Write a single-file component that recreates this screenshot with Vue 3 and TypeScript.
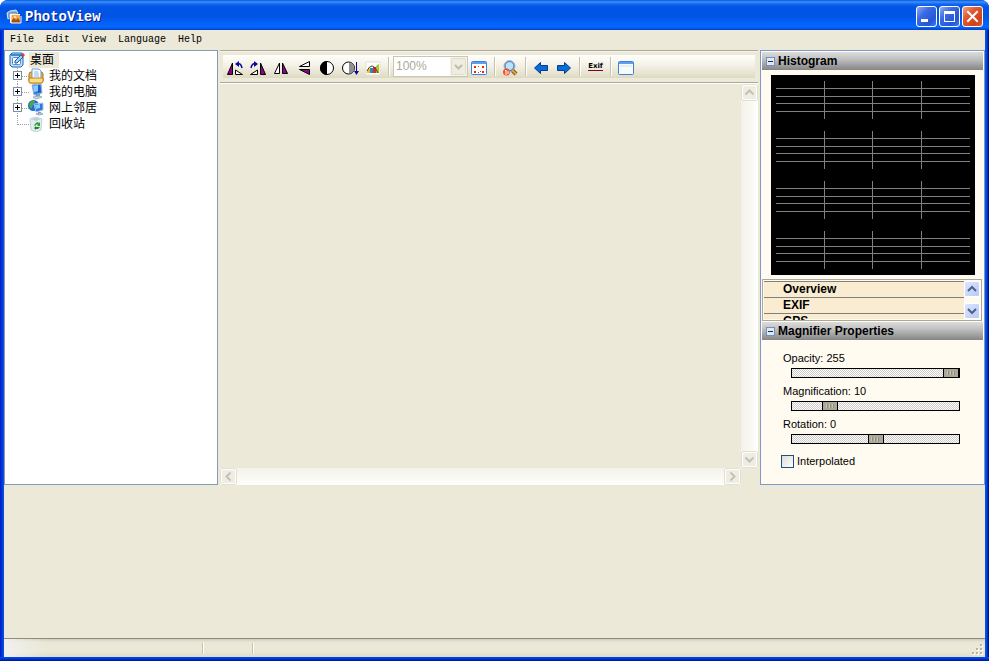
<script setup lang="ts">
import { reactive, ref } from 'vue'

interface Slider {
  id: string
  label: string
  min: number
  max: number
  value: number
}

const menus: string[] = ['File', 'Edit', 'View', 'Language', 'Help']
const places = [
  { name: '我的文档', icon: 'documents', expandable: true },
  { name: '我的电脑', icon: 'computer', expandable: true },
  { name: '网上邻居', icon: 'network', expandable: true },
  { name: '回收站', icon: 'recycle', expandable: false },
]
const sections: string[] = ['Overview', 'EXIF', 'GPS']
const sliders = reactive<Slider[]>([
  { id: 'opacity', label: 'Opacity', min: 0, max: 255, value: 255 },
  { id: 'magnification', label: 'Magnification', min: 0, max: 50, value: 10 },
  { id: 'rotation', label: 'Rotation', min: -180, max: 180, value: 0 },
])
const interpolated = ref(false)
const showHistogram = ref(true)
const showMagnifier = ref(true)

const bands = [0, 50, 100, 150]
const levels = [13, 21, 28, 36]
const columns = [53, 101, 150]
</script>

<template>
  <div class="window">
    <header class="titlebar">
      <svg class="app-icon" viewBox="0 0 16 16" width="16" height="16" aria-hidden="true">
        <path d="M1 4l3-2 6-1 2 3-8 5-2 1z" fill="#7db4e6" stroke="#d5e9fa" />
        <path d="M3 4h8v5H3z" fill="#c9e0f4" stroke="#5d86b8" />
        <path d="M4 5h10v9H4z" fill="#fff4df" />
        <path d="M5 6h9v8H5z" fill="#f5a94a" />
        <path d="M5 12l3-3 2 2 2-2 2 3v2H5z" fill="#a5501c" />
        <circle cx="9" cy="8" r="1" fill="#fff0a0" />
        <path d="M5 5v9h10V7" fill="none" stroke="#fffaf0" />
      </svg>
      <h1>PhotoView</h1>
      <div class="caption-buttons">
        <button type="button" class="caption" aria-label="Minimize">
          <svg viewBox="0 0 19 19" width="19" height="19"><path d="M4 12h7v3H4z" fill="#fff" /></svg>
        </button>
        <button type="button" class="caption" aria-label="Maximize">
          <svg viewBox="0 0 19 19" width="19" height="19"><path d="M4 4h11v11H4zM5 7v7h9V7z" fill="#fff" fill-rule="evenodd" /></svg>
        </button>
        <button type="button" class="caption close" aria-label="Close">
          <svg viewBox="0 0 19 19" width="19" height="19"><path d="M5 5l9 9M14 5l-9 9" stroke="#fff" stroke-width="2" stroke-linecap="square" /></svg>
        </button>
      </div>
    </header>

    <div class="client">
      <nav class="menubar">
        <button v-for="menu in menus" :key="menu" type="button">{{ menu }}</button>
      </nav>

      <main class="workspace">
        <aside class="tree">
          <div class="root">
            <svg viewBox="0 0 16 16" width="16" height="16" aria-hidden="true">
              <path d="M1 3l2-2h10l1 2v10l-2 2H3l-2-2z" fill="#c6e0f7" stroke="#1c67b4" />
              <path d="M2 2h11v2H2z" fill="#3c8bd4" />
              <rect x="3.500" y="5.500" width="8" height="7" rx="1" fill="#fff" stroke="#4a93d8" />
              <path d="M6 11V9l6-6 2 2-6 6z" fill="#a9d2f3" stroke="#165ba6" />
              <path d="M12 3l2-2 2 2-2 2z" fill="#d6432c" />
            </svg>
            <span class="selected">桌面</span>
          </div>
          <ul>
            <li v-for="place in places" :key="place.name">
              <button v-if="place.expandable" type="button" class="expander" :aria-label="place.name">
                <svg viewBox="0 0 9 9" width="9" height="9">
                  <rect x=".5" y=".5" width="8" height="8" fill="#fff" stroke="#7b8fa8" />
                  <path d="M2 4h5v1H2zM4 2h1v5H4z" fill="#000" />
                </svg>
              </button>
              <svg class="place-icon" viewBox="0 0 16 16" width="16" height="16" aria-hidden="true">
                <g v-if="place.icon === 'documents'">
                  <path d="M1 6q0-2 2-2h10q2 0 2 2v7q0 2-2 2H2q-1 0-1-2z" fill="#e9b23e" stroke="#b47a12" />
                  <path d="M4 1h7l2 2v8H4z" fill="#f8fcff" stroke="#6c9fd5" />
                  <path d="M6 4h4M6 6h5M6 8h5" stroke="#8db9e5" />
                  <path d="M1 10h14v3q0 2-2 2H2q-1 0-1-2z" fill="#fbdc83" stroke="#bc8420" />
                </g>
                <g v-else-if="place.icon === 'computer'">
                  <path d="M4 1l9-1 1 9-8 2z" fill="#2f7fe4" stroke="#8fb2dc" />
                  <path d="M5 2l5-1v6l-4 1z" fill="#8ccbff" />
                  <path d="M10 1h2l1 7-3 1z" fill="#1a5ccc" />
                  <path d="M8 10h4v3H7z" fill="#7f9abb" />
                  <path d="M5 13l7-1 2 1-6 2z" fill="#cfdcea" stroke="#9dafc5" />
                </g>
                <g v-else-if="place.icon === 'network'">
                  <circle cx="5.500" cy="5.500" r="5.500" fill="#1f6ccd" />
                  <path d="M2 2q4-3 5 0L5 5 3 9Q0 6 2 2z" fill="#4aa846" />
                  <path d="M6 4l9-1v7l-7 2z" fill="#2c78e0" stroke="#a8c6e8" />
                  <path d="M7 5l5-1v4L8 9z" fill="#8ccbff" />
                  <path d="M10 12h3v1h-3z" fill="#7d97b7" />
                  <path d="M8 14l5-1 2 1-4 1z" fill="#dce8f4" stroke="#91a8c4" />
                </g>
                <g v-else>
                  <path d="M2 3l6-2 6 2-1 11-5 2-5-2z" fill="#e2edf3" stroke="#c3d2da" />
                  <path d="M3 3l5-1 5 1-5 2z" fill="#b8ccd8" />
                  <path d="M6 9l3-3 2 1 1-1v4H9l1-1-1-1-2 2z" fill="#28a22b" />
                  <path d="M12 11l-2 2H8v1l-2-2 2-2v1h2z" fill="#168c1c" />
                </g>
              </svg>
              <span>{{ place.name }}</span>
            </li>
          </ul>
        </aside>

        <section class="center">
          <div class="toolbar-frame">
            <div class="toolbar" role="toolbar">
              <button type="button" aria-label="Rotate left">
                <svg viewBox="0 0 18 18" width="18" height="18">
                  <path d="M6.500 4v11.500h-5z" fill="#900090" stroke="#000" />
                  <path d="M9.500 11v4.500h7z" fill="#fff" stroke="#000" />
                  <path d="M12 5q3-1 4 4" fill="none" stroke="#0808a0" stroke-width="1.500" />
                  <path d="M9 5l4-3v6z" fill="#0808a0" />
                </svg>
              </button>
              <button type="button" aria-label="Rotate right">
                <svg viewBox="0 0 18 18" width="18" height="18">
                  <path d="M11.500 4v11.500h5z" fill="#900090" stroke="#000" />
                  <path d="M8.500 11v4.500h-7z" fill="#fff" stroke="#000" />
                  <path d="M6 5Q3 4 2 9" fill="none" stroke="#0808a0" stroke-width="1.500" />
                  <path d="M9 5L5 2v6z" fill="#0808a0" />
                </svg>
              </button>
              <button type="button" aria-label="Flip horizontal">
                <svg viewBox="0 0 18 18" width="18" height="18">
                  <path d="M7.500 4v10.500h-5z" fill="#fff" stroke="#000" />
                  <path d="M10.500 4v10.500h5z" fill="#900090" stroke="#000" />
                </svg>
              </button>
              <button type="button" aria-label="Flip vertical">
                <svg viewBox="0 0 18 18" width="18" height="18">
                  <path d="M14.500 2.500v5h-10z" fill="#fff" stroke="#000" />
                  <path d="M14.500 15.500v-5h-10z" fill="#900090" stroke="#000" />
                </svg>
              </button>
              <button type="button" aria-label="Contrast">
                <svg viewBox="0 0 18 18" width="18" height="18">
                  <circle cx="9" cy="9" r="6.500" fill="#fff" stroke="#000" />
                  <path d="M9 2a7 7 0 0 0 0 14z" fill="#000" />
                </svg>
              </button>
              <button type="button" aria-label="Brightness">
                <svg viewBox="0 0 18 18" width="18" height="18">
                  <circle cx="7.500" cy="9" r="6" fill="#fff" stroke="#000" />
                  <path d="M8 3.500a5.500 5.500 0 0 1 0 11z" fill="#909090" />
                  <path d="M15 3h1v9h2l-2.500 4-2.500-4h2z" fill="#0808a0" />
                </svg>
              </button>
              <button type="button" aria-label="Levels">
                <svg viewBox="0 0 18 18" width="18" height="18">
                  <path d="M2 3h14v13H2z" fill="#fff" stroke="#e2e0d8" />
                  <path d="M12 7l3-2v9h-3z" fill="#a8c81c" />
                  <path d="M3 11l3-2v5H3z" fill="#f0c020" />
                  <path d="M6 9h3v5H6z" fill="#1c8ec4" />
                  <path d="M9 8h3v6H9z" fill="#e8242c" />
                  <path d="M3 12q2-5 5-5t6 7" fill="none" stroke="#404040" />
                </svg>
              </button>
              <i class="separator"></i>
              <label class="zoom">
                <select disabled aria-label="Zoom"><option>100%</option></select>
                <svg viewBox="0 0 17 19" width="17" height="19" aria-hidden="true">
                  <path d="M0 0h17v19H0z" fill="#f5f4ea" />
                  <rect x="1.500" y="1.500" width="14" height="16" rx="1" fill="#efede0" stroke="#e0ddcb" />
                  <path d="M5 8l3.500 3.500L12 8" fill="none" stroke="#bfbcae" stroke-width="2" />
                </svg>
              </label>
              <button type="button" aria-label="Fit to window">
                <svg viewBox="0 0 18 18" width="18" height="18">
                  <rect x="1.500" y="2.500" width="15" height="13" rx="1" fill="#fff" stroke="#3c82dc" />
                  <path d="M2 3h14v2H2z" fill="#5ea0ee" />
                  <path d="M4 7h2v2H4zM12 7h2v2h-2zM4 12h2v2H4zM12 12h2v2h-2zM8 7h1v1H8zM10 12h1v1h-1zM8 13h1v1H8z" fill="#e02818" />
                </svg>
              </button>
              <i class="separator"></i>
              <button type="button" aria-label="Magnifier">
                <svg viewBox="0 0 18 18" width="18" height="18">
                  <path d="M11 11l4 4" stroke="#8a5216" stroke-width="4" />
                  <path d="M11 11l4 4" stroke="#eda23e" stroke-width="2" />
                  <circle cx="8.500" cy="7" r="5.500" fill="none" stroke="#a8b4bc" />
                  <circle cx="8.500" cy="7" r="4.500" fill="#b8e4fb" stroke="#2e6db4" />
                  <circle cx="5.500" cy="13" r="3.500" fill="#ee5236" />
                  <path d="M4 12l1-1v5M7 12v3" stroke="#fff" fill="none" />
                </svg>
              </button>
              <i class="separator"></i>
              <button type="button" aria-label="Previous">
                <svg viewBox="0 0 18 18" width="18" height="18"><path d="M2.500 9l6-5.500v3h7v5h-7v3z" fill="#0a6cd8" stroke="#033c94" /></svg>
              </button>
              <button type="button" aria-label="Next">
                <svg viewBox="0 0 18 18" width="18" height="18"><path d="M15.500 9l-6-5.500v3h-7v5h7v3z" fill="#0a6cd8" stroke="#033c94" /></svg>
              </button>
              <i class="separator"></i>
              <button type="button" class="exif"><span>Exif</span></button>
              <i class="separator"></i>
              <button type="button" aria-label="Full screen">
                <svg viewBox="0 0 18 18" width="18" height="18">
                  <rect x="1.500" y="2.500" width="15" height="13" rx="1" fill="#f7fafc" stroke="#3c82dc" />
                  <path d="M2 3h14v2H2z" fill="#5ea0ee" />
                  <path d="M3 7h12" stroke="#d6e2ee" />
                </svg>
              </button>
            </div>
          </div>
          <div class="viewer">
            <div class="canvas"></div>
            <div class="scrollbar vertical">
              <button type="button" disabled aria-label="Scroll up"><svg viewBox="0 0 15 15" width="15" height="15"><path d="M3.500 9.500l4-4 4 4" /></svg></button>
              <button type="button" disabled aria-label="Scroll down"><svg viewBox="0 0 15 15" width="15" height="15"><path d="M3.500 5.500l4 4 4-4" /></svg></button>
            </div>
            <div class="scrollbar horizontal">
              <button type="button" disabled aria-label="Scroll left"><svg viewBox="0 0 15 15" width="15" height="15"><path d="M9.500 3.500l-4 4 4 4" /></svg></button>
              <button type="button" disabled aria-label="Scroll right"><svg viewBox="0 0 15 15" width="15" height="15"><path d="M5.500 3.500l4 4-4 4" /></svg></button>
            </div>
          </div>
        </section>

        <aside class="side">
          <h2>
            <button type="button" @click="showHistogram = !showHistogram">
              <svg viewBox="0 0 9 9" width="9" height="9"><rect x=".5" y=".5" width="8" height="8" fill="#dfe8f6" stroke="#7391b8" /><path d="M2 4h5v1H2z" fill="#1c2c54" /></svg>
              Histogram
            </button>
          </h2>
          <div v-if="showHistogram" class="histogram">
            <svg viewBox="0 0 204 200" aria-hidden="true">
              <path d="M0 0h204v200H0z" fill="#000" />
              <g v-for="band in bands" :key="band" fill="#808080">
                <rect v-for="level in levels" :key="level" x="5" :y="band + level" width="194" height="1" />
                <rect v-for="column in columns" :key="column" :x="column" :y="band + 6" width="1" height="38" />
              </g>
            </svg>
          </div>
          <div class="sections">
            <ul>
              <li v-for="section in sections" :key="section">{{ section }}</li>
            </ul>
            <div class="section-scroll">
              <button type="button" aria-label="Previous section"><svg viewBox="0 0 14 14" width="14" height="14"><path d="M3 9l4-4 4 4" /></svg></button>
              <button type="button" aria-label="Next section"><svg viewBox="0 0 14 14" width="14" height="14"><path d="M3 5l4 4 4-4" /></svg></button>
            </div>
          </div>
          <h2>
            <button type="button" @click="showMagnifier = !showMagnifier">
              <svg viewBox="0 0 9 9" width="9" height="9"><rect x=".5" y=".5" width="8" height="8" fill="#dfe8f6" stroke="#7391b8" /><path d="M2 4h5v1H2z" fill="#1c2c54" /></svg>
              Magnifier Properties
            </button>
          </h2>
          <div v-if="showMagnifier" class="magnifier">
            <div v-for="slider in sliders" :key="slider.id" class="slider">
              <label :for="slider.id">{{ slider.label }}: {{ slider.value }}</label>
              <input :id="slider.id" v-model.number="slider.value" type="range" :min="slider.min" :max="slider.max" />
            </div>
            <label class="check">
              <input v-model="interpolated" type="checkbox" />
              Interpolated
            </label>
          </div>
        </aside>
      </main>

      <footer class="statusbar">
        <span class="cell wide"></span>
        <span class="cell"></span>
        <svg class="grip" viewBox="0 0 12 12" width="12" height="12" aria-hidden="true">
          <path d="M9 1h2v2H9zM5 5h2v2H5zM9 5h2v2H9zM1 9h2v2H1zM5 9h2v2H5zM9 9h2v2H9z" fill="#fff" />
          <path d="M8 0h2v2H8zM4 4h2v2H4zM8 4h2v2H8zM0 8h2v2H0zM4 8h2v2H4zM8 8h2v2H8z" fill="#b8b4a2" />
        </svg>
      </footer>
    </div>
  </div>
</template>

<style>
body {
  margin: 0;
  background: #fff;
}
</style>

<style scoped>
.window,
.window * {
  box-sizing: border-box;
}

.window {
  display: flex;
  flex-direction: column;
  min-height: 100vh;
  padding: 0 4px 4px;
  border-radius: 8px 8px 0 0;
  background:
    linear-gradient(#0046e6 0 1px, #0030d0 2px, #00138c 4px) 0 100% / 100% 4px no-repeat,
    linear-gradient(90deg, #0019cf, #0855dd 4px) 0 0 / 4px 100% no-repeat,
    linear-gradient(90deg, #0855dd, #0046e6 2px, #00138c 3px) 100% 0 / 4px 100% no-repeat,
    #0855dd;
  font: 11px/16px "Liberation Sans", sans-serif;
  color: #000;
  overflow: hidden;
}

button {
  margin: 0;
  padding: 0;
  border: 0;
  background: none;
  color: inherit;
  font: inherit;
}

svg {
  display: block;
}

ul {
  margin: 0;
  padding: 0;
  list-style: none;
}

.titlebar {
  display: flex;
  align-items: center;
  height: 30px;
  margin: 0 -4px;
  padding: 3px 6px 0;
  background: linear-gradient(#0958d8 0, #3b93ff 2px, #1467ee 4px, #0254e3 7px, #0054e4 16px, #0462fa 24px, #0468ff 27px, #0450d8 29px, #003dd7 30px);
}

.titlebar h1 {
  flex: 1;
  margin: 0 0 0 3px;
  font: bold 14px/20px "Liberation Mono", monospace;
  color: #fff;
  text-shadow: 1px 1px #0a1883;
}

.caption-buttons {
  display: flex;
  gap: 2px;
}

.caption {
  width: 21px;
  height: 21px;
  border: 1px solid #fff;
  border-radius: 3px;
  background: linear-gradient(135deg, #8fabf4, #3b6ae4 35%, #2456d8 75%, #3f79f2);
}

.caption.close {
  background: linear-gradient(135deg, #f0a48c, #e05a32 35%, #d04316 75%, #e05c30);
}

.client {
  display: flex;
  flex: 1;
  flex-direction: column;
  background: #ece9d8;
}

.menubar {
  display: flex;
  gap: 12px;
  height: 20px;
  padding: 0 6px;
  font: 10px/20px "Liberation Mono", monospace;
}

.workspace {
  display: grid;
  grid-template-columns: 214px minmax(0, 1fr) 225px;
  gap: 2px;
}

.tree {
  padding-top: 1px;
  border: 1px solid #7f9db9;
  background: #fff;
  font: 12px/16px "Liberation Sans", "Noto Sans CJK SC", sans-serif;
}

.root {
  display: flex;
  gap: 4px;
  height: 16px;
  padding-left: 4px;
}

.selected {
  padding: 0 5px 0 1px;
  background: #ece9d8;
}

.tree li {
  position: relative;
  display: flex;
  align-items: center;
  gap: 5px;
  height: 16px;
  padding-left: 23px;
}

.tree li::before {
  content: "";
  position: absolute;
  top: 0;
  left: 12px;
  width: 11px;
  height: 8px;
  border-bottom: 1px dotted #a0a0a0;
  border-left: 1px dotted #a0a0a0;
}

.tree li:not(:last-child)::after {
  content: "";
  position: absolute;
  top: 8px;
  left: 12px;
  height: 8px;
  border-left: 1px dotted #a0a0a0;
}

.expander {
  position: absolute;
  z-index: 1;
  top: 3px;
  left: 8px;
}

.center {
  display: flex;
  flex-direction: column;
}

.toolbar-frame {
  padding: 4px 3px;
  border-top: 1px solid #aca899;
  border-bottom: 1px solid #aca899;
  box-shadow: 0 1px #fff, inset 0 1px #f8f6ec;
}

.toolbar {
  display: flex;
  align-items: center;
  height: 23px;
  padding-left: 1px;
  background: linear-gradient(#fffefb, #f4f2e6 45%, #dedac2);
}

.toolbar button {
  display: flex;
  flex: none;
  align-items: center;
  width: 23px;
  height: 23px;
  padding: 2px 2px 0;
}

.separator {
  flex: none;
  width: 8px;
  height: 19px;
  background: linear-gradient(90deg, #c5c2b0 50%, #fff 50%) 3px 0 / 2px 100% no-repeat;
}

.zoom {
  display: flex;
  flex: none;
  width: 75px;
  height: 21px;
  border: 1px solid #c9c7ba;
  background: #fff;
}

.zoom select {
  flex: 1;
  min-width: 0;
  padding: 0 2px;
  border: 0;
  appearance: none;
  background: #fff;
  color: #aca899;
  font: 12px/19px "Liberation Sans", sans-serif;
  opacity: 1;
}

.toolbar .exif {
  justify-content: center;
  padding: 0;
}

.exif span {
  border-bottom: 1px solid #800020;
  font: bold 7px/8px "DejaVu Sans", sans-serif;
}

.viewer {
  display: grid;
  flex: 1;
  grid-template-columns: minmax(0, 1fr) 17px;
  grid-template-rows: minmax(0, 1fr) 17px;
  padding-top: 1px;
}

.scrollbar {
  display: flex;
  justify-content: space-between;
  padding: 1px;
}

.vertical {
  flex-direction: column;
  background: linear-gradient(90deg, #f3f2e9, #fefefc);
}

.horizontal {
  background: linear-gradient(#f3f2e9, #fefefc);
}

.scrollbar button {
  border-radius: 2px;
  background: #efede2;
  box-shadow: inset 0 0 0 1px #fff, 0 0 0 1px #e2dfd0;
}

.scrollbar path {
  fill: none;
  stroke: #c3c1b5;
  stroke-width: 2;
}

.side {
  padding: 1px 1px 15px;
  border: 1px solid #7b98cf;
  background: #fffbf0;
}

.side h2 {
  margin: 0;
  font: bold 12px/18px "Liberation Sans", sans-serif;
  background: linear-gradient(#dcdcdc, #c4c4c4 35%, #858585);
}

.side h2 button {
  display: flex;
  align-items: center;
  gap: 3px;
  width: 100%;
  padding-left: 4px;
}

.histogram {
  padding: 5px 8px 4px 9px;
}

.sections {
  display: flex;
  height: 42px;
  margin: 0 1px 1px 0;
  padding: 1px;
  border: 1px solid #aca899;
  overflow: hidden;
}

.sections ul {
  flex: 1;
  background: #faecd0;
  font: bold 12px/15px "Liberation Sans", sans-serif;
}

.sections li {
  height: 16px;
  padding-left: 19px;
  border-top: 1px solid #808080;
}

.section-scroll {
  display: flex;
  flex-direction: column;
  justify-content: space-between;
}

.section-scroll button {
  border: 1px solid #fff;
  border-radius: 2px;
  background: linear-gradient(135deg, #dbe6ff, #b6cafa);
}

.section-scroll path {
  fill: none;
  stroke: #4d6185;
  stroke-width: 2;
}

.magnifier {
  padding: 10px 22px 0 18px;
}

.slider {
  display: flex;
  flex-direction: column;
  height: 33px;
  padding-left: 3px;
}

.slider label {
  line-height: 16px;
}

.slider input {
  width: auto;
  height: 10px;
  margin: 2px 1px 0 8px;
  border: 1px solid #000;
  border-radius: 0;
  appearance: none;
  background: repeating-conic-gradient(#cfcbc8 0 25%, #fff 0 50%) 0 0 / 2px 2px;
}

.slider input::-webkit-slider-thumb {
  width: 16px;
  height: 8px;
  border: 0 solid #000;
  border-width: 0 1px;
  appearance: none;
  background:
    repeating-linear-gradient(90deg, #c9c6b7 0 1px, #8f8c7a 1px 2px, #aca899 2px 3px) 50% 50% / 9px 4px no-repeat,
    #aca899;
}

.check {
  display: flex;
  align-items: center;
  gap: 3px;
  margin-top: 4px;
}

.check input {
  width: 13px;
  height: 13px;
  margin: 0 0 0 1px;
  border: 1px solid #1c5180;
  appearance: none;
  background: linear-gradient(135deg, #dcdcd7, #fff) padding-box;
}

.check input:checked {
  box-shadow: inset 0 0 0 3px #fff;
  background: #21a121;
}

.statusbar {
  display: flex;
  align-items: stretch;
  height: 19px;
  margin-top: auto;
  padding: 2px 1px 1px 0;
  border-top: 1px solid #908d7e;
  background:
    linear-gradient(90deg, #f0f0ee, #f0f0ee00 45px),
    linear-gradient(#d0cdbd, #e9e6d5 3px, #ece9d8 12px, #e0dcc6);
}

.cell {
  width: 50px;
  margin: 2px 0;
  border-right: 1px solid #c5c2b0;
  box-shadow: 1px 0 #fff;
}

.cell.wide {
  width: 199px;
}

.grip {
  align-self: flex-end;
  margin-left: auto;
}
</style>
